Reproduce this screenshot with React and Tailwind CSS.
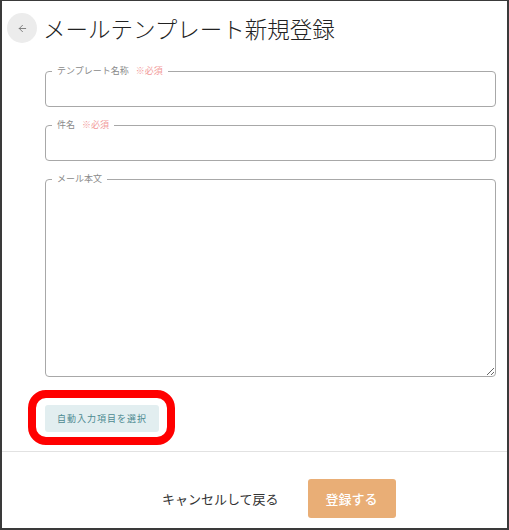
import { ArrowLeft } from 'lucide-react';

const jp = { fontFamily: '"Noto Sans CJK JP", "Noto Sans", sans-serif' };

function Field({ label, required, children }) {
  return (
    <fieldset className="min-w-0 rounded-[4px] border border-[#a8a8a8]">
      <legend className="ml-[6px] px-[5px] text-[9px] leading-[12px] text-[#8a8a8a]">
        {label}
        {required && <span className="ml-[7px] text-[#f29a9a]">※必須</span>}
      </legend>
      {children}
    </fieldset>
  );
}

export default function App() {
  return (
    <div
      className="flex h-[530px] w-[509px] flex-col border-t border-b-2 border-x-2 border-[#3a3a3a] bg-white"
      style={jp}
    >
      <header className="flex items-center pl-[5px] pt-[12px]">
        <button className="flex h-[30px] w-[30px] items-center justify-center rounded-full bg-[#ececec] text-[#777]">
          <ArrowLeft size={11} strokeWidth={2} />
        </button>
        <h1 className="ml-[6px] text-[22.5px] font-light leading-[30px] text-[#222]">
          メールテンプレート新規登録
        </h1>
      </header>

      <main className="flex flex-col pl-[43px] pr-[11px]">
        <div className="mt-[22px]">
          <Field label="テンプレート名称" required>
            <input className="block h-[29px] w-full bg-transparent px-3 text-sm outline-none" />
          </Field>
        </div>
        <div className="mt-[12px]">
          <Field label="件名" required>
            <input className="block h-[29px] w-full bg-transparent px-3 text-sm outline-none" />
          </Field>
        </div>
        <div className="mt-[12px]">
          <Field label="メール本文">
            <textarea className="block h-[191px] w-full bg-transparent px-3 text-sm outline-none" />
          </Field>
        </div>

        <div className="mb-[19px] mt-[26px] flex">
          <div className="relative">
            <button className="h-[27px] rounded-[3px] bg-[#e2eef0] px-3 text-[9px] tracking-[1px] text-[#4d8a90]">
              自動入力項目を選択
            </button>
            <div className="pointer-events-none absolute -bottom-[13px] -left-[17px] -right-[16px] -top-[13px] rounded-[18px] border-[8px] border-[#ff0000]" />
          </div>
        </div>
      </main>

      <footer className="flex items-center border-t border-[#e2e2e2] pl-[160px] pt-[27px]">
        <button className="text-[13px] text-[#333]">キャンセルして戻る</button>
        <button className="ml-[29px] h-[39px] w-[88px] rounded-[3px] bg-[#e9ae76] text-[13px] font-medium text-white">
          登録する
        </button>
      </footer>
    </div>
  );
}
